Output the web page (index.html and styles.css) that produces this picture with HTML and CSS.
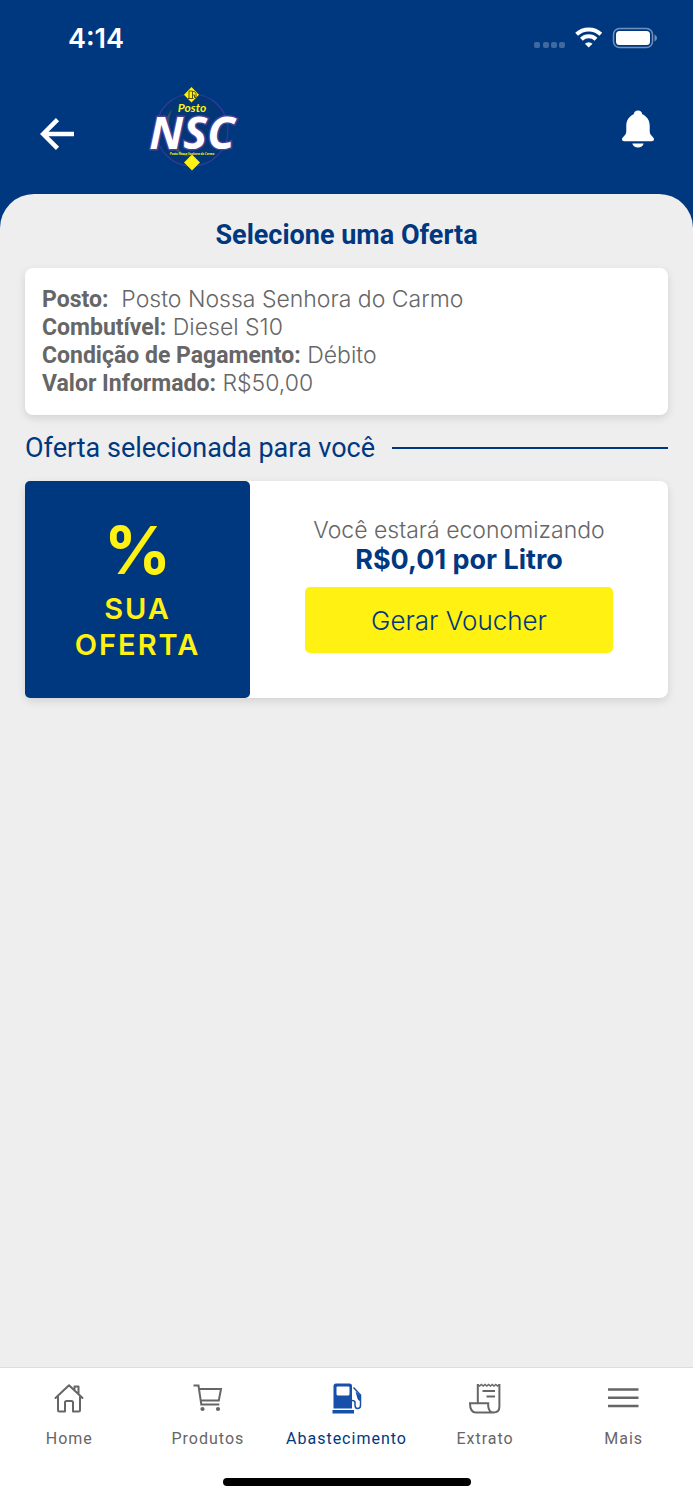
FILE: index.html
```html
<!doctype html>
<html lang="pt-BR">
<head>
<meta charset="utf-8">
<meta name="viewport" content="width=device-width, initial-scale=1">
<title>Posto NSC - Selecione uma Oferta</title>
<link rel="stylesheet" href="styles.css">
</head>

<body>
<div class="status">
	<span class="time">4:14</span>
	<svg class="statusIcons" width="124" height="22" viewBox="0 0 124 22">
		<g fill="#fff" opacity=".25">
			<rect x="0" y="15" width="6" height="6" rx="2"/>
			<rect x="9" y="15" width="6" height="6" rx="2"/>
			<rect x="17" y="15" width="6" height="6" rx="2"/>
			<rect x="25" y="15" width="6" height="6" rx="2"/>
		</g>
		<g fill="none" stroke="#fff" stroke-width="4">
			<path d="M42.6 7.2a17.6 17.6 0 0 1 24.2 0"/>
			<path d="M47.4 12.2a10.6 10.6 0 0 1 14.6 0"/>
		</g>
		<path d="M54.7 20.6l-3.8-3.9a5.4 5.4 0 0 1 7.6 0z" fill="#fff"/>
		<rect x="79.5" y="1.5" width="39" height="19" rx="6" fill="none" stroke="#fff" stroke-width="1.5" opacity=".45"/>
		<rect x="82" y="4" width="34" height="14" rx="3.5" fill="#fff"/>
		<path d="M120.5 7.5q2.5 1 2.5 3.5t-2.5 3.5z" fill="#fff" opacity=".45"/>
	</svg>
</div>

<header class="topbar">
	<button class="iconBtn back" aria-label="Voltar">
		<svg width="34" height="32" viewBox="0 0 34 32" fill="none" stroke="#fff" stroke-width="4.5">
			<path d="M17.5 1.6L3.2 16l14.3 14.4M3.5 16H34"/>
		</svg>
	</button>
	<svg class="logo" width="88" height="84" viewBox="0 0 88 84">
		<circle cx="43" cy="43" r="36" fill="#023674" stroke="#33399a" stroke-width="1.2"/>
		<path d="M23 22q-14 17-1 36 9 13 22 12-12-2-19-14-9-16-2-34z" fill="#59636b" opacity=".6"/>
		<path d="M42.500 0L50 7.700 42.500 15.400 35 7.700z" fill="#fff212"/>
		<path d="M40 11.500v-7.500h3.500v7.500M39 11.500h5.500M44 4.500h1.500l1.500 2v4h-1.500V8H44" fill="none" stroke="#5a5317" stroke-width="1"/>
		<text class="logoTop" x="43" y="25" text-anchor="middle">Posto</text>
		<text class="logoName" x="43" y="62" text-anchor="middle">NSC</text>
		<text class="logoSub" x="43" y="68" text-anchor="middle">Posto Nossa Senhora do Carmo</text>
		<path d="M43 67.500L51 75.500 43 83.500 35 75.500z" fill="#fff212"/>
	</svg>
	<button class="iconBtn bell" aria-label="Notificações">
		<svg width="32" height="38" viewBox="0 0 32 38" fill="#fff">
			<path d="M16 0.500c-2.400 0-4 1.500-4.300 3.700C7 6.200 4.300 10.500 4.300 15.500v5.500c0 2.600-1.100 3.900-2.600 5.600C.6 27.800 0 28.500 0 29.300 0 30.500.9 31.200 2.200 31.200h27.600c1.300 0 2.200-.7 2.200-1.900 0-.8-.6-1.500-1.700-2.700-1.500-1.700-2.600-3-2.600-5.600v-5.500c0-5-2.700-9.300-7.400-11.300C20 2 18.400.5 16 .5z"/>
			<path d="M10.300 33.500h11.400c-.7 2.500-2.900 4-5.700 4s-5-1.500-5.700-4z"/>
		</svg>
	</button>
</header>

<main class="content">
	<h1>Selecione uma Oferta</h1>

	<div class="card info">
		<p><b>Posto:</b>&nbsp; Posto Nossa Senhora do Carmo</p>
		<p><b>Combutível:</b> Diesel S10</p>
		<p><b>Condição de Pagamento:</b> Débito</p>
		<p><b>Valor Informado:</b> R$50,00</p>
	</div>

	<h2>Oferta selecionada para você</h2>

	<div class="card offer">
		<div class="offerTag">
			<span class="percent">%</span>
			<span class="tagText">SUA<br>OFERTA</span>
		</div>
		<div class="offerBody">
			<p>Você estará economizando</p>
			<p class="price">R$0,01 por Litro</p>
			<button class="voucher">Gerar Voucher</button>
		</div>
	</div>
</main>

<nav class="tabs">
	<a href="#">
		<svg width="32" height="32" viewBox="0 0 32 32" fill="none" stroke="#666" stroke-width="2" stroke-linejoin="round" stroke-linecap="round">
			<path d="M2.500 15L16 2.300 29.500 15M5 13.500V27q0 1.500 1.500 1.500h5.500v-9q0-1.500 1.500-1.500h5q1.500 0 1.500 1.500v9h5.500q1.500 0 1.500-1.500V13.500M21.500 7V3.500h4v7.500"/>
		</svg>
		<span>Home</span>
	</a>
	<a href="#">
		<svg width="32" height="32" viewBox="0 0 32 32" fill="none" stroke="#666" stroke-width="2">
			<path d="M1.500 2.500h5L9.300 21.600h18M7 6h22l-2.200 11.500H8.800"/>
			<circle cx="10.500" cy="26" r="2.100" fill="#666" stroke="none"/>
			<circle cx="26" cy="26" r="2.100" fill="#666" stroke="none"/>
		</svg>
		<span>Produtos</span>
	</a>
	<a href="#" class="active">
		<svg width="32" height="32" viewBox="0 0 32 32">
			<path fill="#1750a8" fill-rule="evenodd" d="M6 .5h13.500q2.500 0 2.500 2.500v22.500H3.500V3q0-2.500 2.500-2.500zM7.500 3.500q-1 0-1 1V11q0 1.500 1.500 1.500h10q1.500 0 1.500-1.500V4.500q0-1-1-1z"/>
			<path fill="#1750a8" d="M2.500 27h21.500v3.500H2.500zM25.500 8.500l5.500 4.500v5.500q-3.500-1-4-4.500z"/>
			<path fill="none" stroke="#1750a8" stroke-width="1.500" d="M23.500 4.500l7 7.500v10.500q0 3-3 3-2.500 0-2.500-3.500v-2.500q0-2-3-2"/>
		</svg>
		<span>Abastecimento</span>
	</a>
	<a href="#">
		<svg width="32" height="32" viewBox="0 0 32 32" fill="none" stroke="#666" stroke-width="2">
			<path d="M8.800 20V1M30.400 1v22.500q0 6-6 6H7q-6 0-6-9.300h18.200V23q.5 6.500 5.500 6.500"/>
			<path d="M8.800 1.500l1.800 1.500L12.400 1.500l1.800 1.500L16 1.500 17.800 3l1.800-1.500L21.400 3l1.800-1.500L25 3l1.800-1.500L28.600 3l1.800-1.500" stroke-width="1.500"/>
			<path d="M13.500 8h12.500M17.500 13.500h8.500"/>
		</svg>
		<span>Extrato</span>
	</a>
	<a href="#">
		<svg width="32" height="32" viewBox="0 0 32 32" stroke="#666" stroke-width="2.500">
			<path d="M0 6.500h30.500M0 14.800h30.500M0 23h30.500"/>
		</svg>
		<span>Mais</span>
	</a>
	<div class="homeBar"></div>
</nav>
</body>
</html>
```

FILE: styles.css
```css
*{
	box-sizing:border-box;
	}
body{
	margin:0;
	min-height:100vh;
	display:flex;
	flex-direction:column;
	background-color:#00387f;
	color:#666;
	font-family:Inter, "Liberation Sans", sans-serif;
	}
h1, h2, p{
	margin:0;
	}
button{
	border:none;
	font-family:inherit;
	cursor:pointer;
	}
.status{
	height:76px;
	padding:0 35px 0 68px;
	display:flex;
	align-items:center;
	justify-content:space-between;
	color:#fff;
	}
.time{
	font-size:27px;
	font-weight:600;
	}
.topbar{
	height:118px;
	padding:10px 39px 22px 40px;
	display:flex;
	align-items:center;
	}
.iconBtn{
	padding:0;
	background:none;
	}
.iconBtn svg, .logo{
	display:block;
	}
.back{
	padding-top:10px;
	}
.logo{
	margin-left:75px;
	overflow:visible;
	}
.logoTop{
	font:italic bold 12px Lato, sans-serif;
	fill:#fff212;
	}
.logoName{
	font:italic bold 45px "Open Sans", sans-serif;
	fill:#fff;
	stroke:#4b3f9c;
	stroke-width:3px;
	paint-order:stroke;
	}
.logoSub{
	font:italic bold 3px "Open Sans", sans-serif;
	fill:#fff212;
	}
.bell{
	margin-left:auto;
	}
.content{
	flex:1;
	padding:24px 25px;
	background-color:#eee;
	border-radius:34px 34px 0 0;
	}
h1{
	color:#00387f;
	font:bold 27px/34px Roboto, sans-serif;
	text-align:center;
	}
.card{
	background-color:#fff;
	border-radius:8px;
	box-shadow:0 3px 8px rgba(0,0,0,.12);
	}
.info{
	margin-top:16px;
	padding:17px 17px 18px;
	font-size:23px;
	font-weight:300;
	line-height:28px;
	}
.info b{
	font-family:Roboto, sans-serif;
	font-weight:bold;
	line-height:20px;
	}
h2{
	margin:16px 0;
	display:flex;
	align-items:center;
	gap:17px;
	color:#00387f;
	font:normal 27px/34px Roboto, sans-serif;
	}
h2::after{
	content:"";
	flex:1;
	height:2px;
	background-color:#00387f;
	}
.offer{
	display:flex;
	min-height:217px;
	}
.offerTag{
	width:35%;
	padding-bottom:4px;
	display:flex;
	flex-direction:column;
	align-items:center;
	justify-content:center;
	background-color:#00387f;
	border-radius:5px;
	color:#fff212;
	font-weight:600;
	text-align:center;
	}
.percent{
	margin-bottom:4px;
	font-size:66px;
	font-weight:bold;
	line-height:74px;
	}
.tagText{
	font-size:29px;
	line-height:36px;
	letter-spacing:2px;
	}
.offerBody{
	flex:1;
	display:flex;
	flex-direction:column;
	align-items:center;
	padding:34px 55px;
	font-size:23px;
	font-weight:300;
	line-height:30px;
	white-space:nowrap;
	}
.price{
	color:#00387f;
	font-size:27px;
	font-weight:bold;
	}
.voucher{
	width:100%;
	height:66px;
	margin-top:12px;
	background-color:#fff212;
	border-radius:5px;
	color:#00387f;
	font-size:26px;
	font-weight:300;
	}
.tabs{
	position:relative;
	height:133px;
	padding-top:15px;
	display:flex;
	background-color:#fff;
	border-top:1px solid #ddd;
	}
.tabs a{
	flex:1;
	display:flex;
	flex-direction:column;
	align-items:center;
	gap:14px;
	color:#666;
	font-family:Roboto, sans-serif;
	font-size:16px;
	line-height:20px;
	letter-spacing:1px;
	text-decoration:none;
	}
.tabs .active{
	color:#00387f;
	}
/* system home indicator, floats over the tab bar */
.homeBar{
	position:absolute;
	left:50%;
	bottom:14px;
	width:248px;
	height:8px;
	margin-left:-124px;
	background-color:#000;
	border-radius:4px;
	}
```
